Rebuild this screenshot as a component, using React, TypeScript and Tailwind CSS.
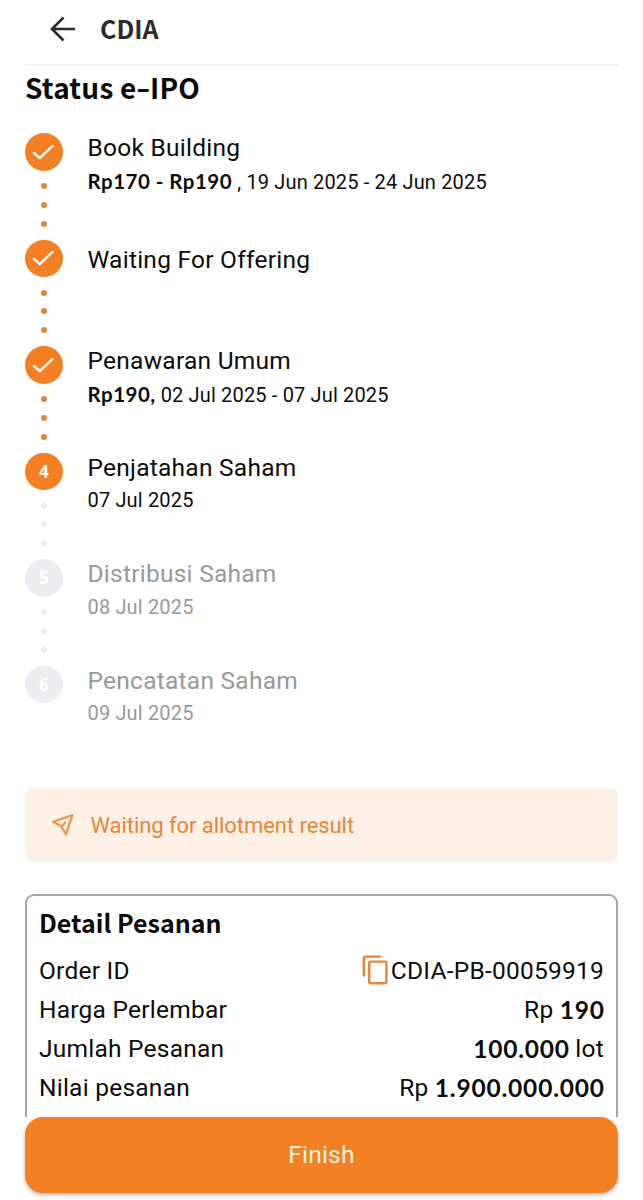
import type { ReactNode } from 'react';

type Step = {
  title: string;
  detail?: ReactNode;
  state: 'done' | 'current' | 'upcoming';
};

const steps: Step[] = [
  {
    title: 'Book Building',
    state: 'done',
    detail: (
      <>
        <Strong className="text-[20.5px] tracking-[0.48px]">Rp170 - Rp190</Strong> , 19 Jun 2025 - 24 Jun 2025
      </>
    ),
  },
  { title: 'Waiting For Offering', state: 'done' },
  {
    title: 'Penawaran Umum',
    state: 'done',
    detail: (
      <>
        <Strong className="text-[20.5px] tracking-[0.48px]">Rp190,</Strong> 02 Jul 2025 - 07 Jul 2025
      </>
    ),
  },
  { title: 'Penjatahan Saham', state: 'current', detail: '07 Jul 2025' },
  { title: 'Distribusi Saham', state: 'upcoming', detail: '08 Jul 2025' },
  { title: 'Pencatatan Saham', state: 'upcoming', detail: '09 Jul 2025' },
];

function Strong({ children, className = '' }: { children: ReactNode; className?: string }) {
  return <span className={`font-['Lato',sans-serif] font-bold ${className}`}>{children}</span>;
}

function Amount({ children }: { children: ReactNode }) {
  return <Strong className="-mr-[0.8px] tracking-[0.8px]">{children}</Strong>;
}

function CheckIcon() {
  return (
    <svg width="22" height="18" viewBox="0 0 22 18" fill="none" className="-ml-px text-white">
      <path d="M2 10 7.9 15.2 20.4 3" stroke="currentColor" strokeWidth="2.4" strokeLinecap="round" strokeLinejoin="round" />
    </svg>
  );
}

function CopyIcon() {
  return (
    <svg width="26" height="30" viewBox="0 0 26 30" fill="none" stroke="#e5853a" strokeWidth="2.4" className="-mt-[2px]">
      <path d="M1.8 21.5V3.4Q1.8 1.6 3.6 1.6H19" />
      <rect x="7.2" y="6.6" width="17.2" height="21.6" rx="1.8" />
    </svg>
  );
}

function StepItem({ step, index, last }: { step: Step; index: number; last: boolean }) {
  const upcoming = step.state === 'upcoming';
  const dot = step.state === 'done' ? 'bg-[#e5833a]' : 'bg-[#ececee]';

  return (
    <li className="flex h-[106.5px]">
      <div className="flex w-[37.5px] flex-col items-center">
        <div
          className={`flex h-[37.5px] w-[37.5px] shrink-0 items-center justify-center rounded-full ${upcoming ? 'bg-[#ecedf3]' : 'bg-[#f38023]'}`}
        >
          {step.state === 'done' ? (
            <CheckIcon />
          ) : (
            <span className="font-['Open_Sans',sans-serif] text-[17px] leading-none font-bold text-white">{index + 1}</span>
          )}
        </div>
        {!last && (
          <div className="flex flex-col gap-[12.7px] pt-[12.7px]">
            <span className={`h-1.5 w-1.5 rounded-full ${dot}`} />
            <span className={`h-1.5 w-1.5 rounded-full ${dot}`} />
            <span className={`h-1.5 w-1.5 rounded-full ${dot}`} />
          </div>
        )}
      </div>
      <div className={`ml-[25px] whitespace-nowrap ${upcoming ? 'text-[#97999b]' : 'text-[#0c0c0c]'} ${step.detail ? '' : 'pt-[5px]'}`}>
        <h2 className="-mt-px text-[24.5px] leading-8 tracking-[0.25px]">{step.title}</h2>
        {step.detail && <p className="mt-[2.5px] text-[20px] leading-7 tracking-[0.16px]">{step.detail}</p>}
      </div>
    </li>
  );
}

function Row({ label, children }: { label: string; children: ReactNode }) {
  return (
    <div className="flex h-[39.2px] items-center justify-between whitespace-nowrap">
      <span>{label}</span>
      <span className="flex items-center">{children}</span>
    </div>
  );
}

export default function App() {
  return (
    <div className="flex h-[1200px] w-[643px] flex-col overflow-hidden bg-white px-[25px] font-['Roboto',sans-serif] text-[#0c0c0c]">
      <header className="flex h-[66px] shrink-0 items-center border-b-2 border-[#f3f3f3] pb-[7px] pl-[25px]">
        <svg width="26" height="26" viewBox="0 0 26 26" fill="none" stroke="#2b2b2b" strokeWidth="2.6">
          <path d="M13.5 1.5 2 13 13.5 24.5M2 13H25" />
        </svg>
        <span className="-mt-px ml-6 font-['Noto_Sans_CJK_SC',sans-serif] text-[25px] leading-none font-bold text-[#2b2b2b]">CDIA</span>
      </header>

      <h1 className="h-[67px] shrink-0 pt-[3px] font-['Noto_Sans_CJK_SC',sans-serif] text-[28px] leading-9 font-bold tracking-[0.2px] text-[#0a0a0a]">
        Status e<span className="mx-[1.5px] inline-block scale-x-140">-</span>IPO
      </h1>

      <ol className="shrink-0">
        {steps.map((step, i) => (
          <StepItem key={step.title} step={step} index={i} last={i === steps.length - 1} />
        ))}
      </ol>

      <div className="mt-[16px] flex h-[74px] shrink-0 items-center rounded-lg bg-[#fdf1e5] pl-[26px] text-[#e5853a]">
        <svg width="24" height="24" viewBox="0 0 24 24" fill="none" stroke="#ec955a" strokeWidth="2.3" strokeLinejoin="round" strokeLinecap="round">
          <path d="M2.2 8.8 21.4 2.2 15 21.4 10.6 13.6ZM10.6 13.6 14.2 9.6" />
        </svg>
        <span className="ml-[15.5px] text-[22px] tracking-[-0.06px]">Waiting for allotment result</span>
      </div>

      <section className="mt-8 h-[223px] shrink-0 rounded-t-[9px] border-2 border-b-0 border-[#a8a8a8] px-[12px] text-[24.5px] tracking-[0.24px]">
        <h2 className="h-[55.5px] pt-2 font-['Noto_Sans_CJK_SC',sans-serif] text-[25px] leading-9 font-bold tracking-normal">
          Detail Pesanan
        </h2>
        <Row label="Order ID">
          <CopyIcon />
          <span className="ml-[3px]">CDIA-PB-00059919</span>
        </Row>
        <Row label="Harga Perlembar">
          Rp&nbsp;<Amount>190</Amount>
        </Row>
        <Row label="Jumlah Pesanan">
          <Amount>100.000</Amount>&nbsp;lot
        </Row>
        <Row label="Nilai pesanan">
          Rp&nbsp;<Amount>1.900.000.000</Amount>
        </Row>
      </section>

      <button className="h-[76px] shrink-0 rounded-[18px] bg-[#f38023] text-[24.5px] tracking-[0.2px] text-[#fff3e6] shadow-[0_2px_4px_rgba(0,0,0,0.3)]">
        Finish
      </button>
    </div>
  );
}
